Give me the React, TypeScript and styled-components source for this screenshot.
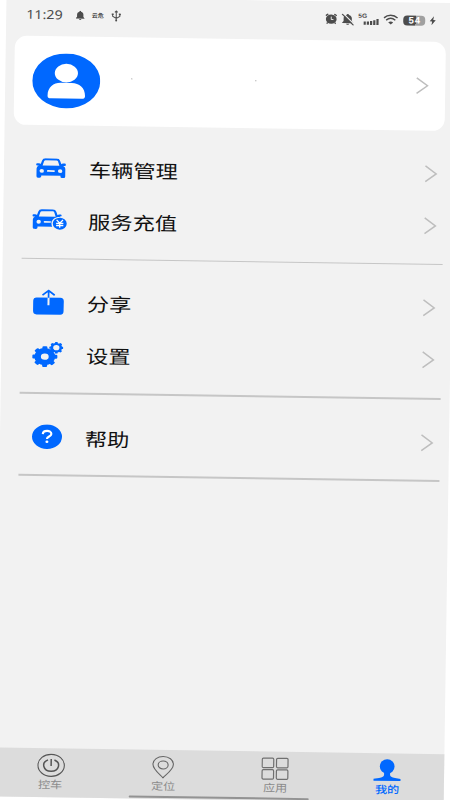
import React from "react";
import styled, { createGlobalStyle } from "styled-components";

const BLUE = "#0068ff";

const GlobalStyle = createGlobalStyle`
  * { box-sizing: border-box; }
  body {
    margin: 0;
    background: #fff;
    font-family: "Noto Sans CJK SC", "Noto Sans", sans-serif;
  }
`;

const Viewport = styled.div`
  width: 450px;
  height: 800px;
  overflow: hidden;
  background: #fff;
`;

const Screen = styled.main`
  display: flex;
  flex-direction: column;
  position: relative;
  width: 449px;
  height: 800px;
  background: #f2f2f2;
  transform-origin: 0 0;
  transform: matrix(1, 0.0148, -0.0148, 1, 6.5, -3.5);
`;

const StatusBar = styled.header`
  display: flex;
  align-items: center;
  justify-content: space-between;
  height: 38.7px;
  padding: 0 19px 3px 19.5px;
  color: #4c4c4c;
`;

const StatusGroup = styled.div`
  display: flex;
  align-items: center;
`;

const Clock = styled.span`
  width: 49px;
  font: 400 12.5px/16px "Noto Sans", sans-serif;
  transform: scaleX(1.14);
  transform-origin: left;
`;

const TinyText = styled.span`
  width: 12px;
  margin: 0 7px 0 7px;
  font-size: 6px;
  line-height: 8px;
  font-weight: 700;
  white-space: nowrap;
`;

const Glyph = styled.svg<{ $gap?: number }>`
  display: block;
  flex: none;
  margin-left: ${(p) => p.$gap ?? 0}px;
`;

const Network = styled.div`
  display: flex;
  width: 21px;
  height: 16px;
  margin-left: 4px;
`;

const NetworkLabel = styled.span`
  width: 5px;
  font: 700 6px/8px "Liberation Sans", sans-serif;
  transform: scaleX(1.1);
  transform-origin: left;
`;

const Battery = styled.span`
  display: flex;
  justify-content: center;
  width: 22px;
  height: 10px;
  margin-left: 5px;
  border-radius: 4px;
  background: linear-gradient(90deg, #4c4c4c 56%, #a0a0a0 56%);
  color: #fff;
  font: 700 9.5px/10.5px "Liberation Sans", sans-serif;
  letter-spacing: 1px;
  padding-left: 1px;
`;

const ProfileCard = styled.section`
  display: flex;
  align-items: center;
  flex: none;
  height: 89.3px;
  margin: 0 8.6px;
  padding: 0 16.5px 0 18.5px;
  border-radius: 12px;
  background: #fff;
`;

const ProfileSpace = styled.div`
  display: flex;
  flex: 1;
  gap: 123px;
  padding: 0 0 6px 31px;
`;

const Speck = styled.i`
  width: 1px;
  height: 1px;
  background: #999;
`;

const Group = styled.section`
  flex: none;
  margin: 0 8.6px 0 19px;
  padding-top: 17px;
`;

const Divider = styled.div`
  height: 1.5px;
  margin-top: 11.8px;
  background: #c6c6c6;
`;

const Row = styled.div`
  display: grid;
  grid-template-columns: 66.2px 1fr 20px;
  align-items: center;
  height: 52px;
`;

const RowIcon = styled.span`
  display: flex;
  justify-content: center;
  width: 55px;
`;

const RowLabel = styled.span`
  justify-self: start;
  font-size: 18.4px;
  line-height: 26px;
  color: #111;
  transform: translateY(0.5px) scaleX(1.21);
  transform-origin: left;
`;

const Spacer = styled.div`
  flex: 1;
`;

const TabBar = styled.nav`
  display: grid;
  grid-template-columns: repeat(4, 1fr);
  height: 49.5px;
  background: #dcdcdc;
`;

const Tab = styled.div<{ $active?: boolean }>`
  display: flex;
  flex-direction: column;
  align-items: center;
  padding: 5px 1px 0 0;
  color: ${(p) => (p.$active ? BLUE : "#8b8b8b")};
  font-weight: ${(p) => (p.$active ? 500 : 400)};
`;

const TabLabel = styled.span`
  font-size: 10.3px;
  line-height: 13px;
  transform: scaleX(1.18);
`;

const HomeIndicator = styled.div`
  position: absolute;
  left: 134px;
  bottom: 1px;
  width: 180px;
  height: 2px;
  border-radius: 1px;
  background: #939393;
`;

const Chevron = () => (
  <Glyph width="14" height="18" viewBox="0 0 14 18" fill="none" stroke="#bebebe" strokeWidth="1.5">
    <path d="M1.4 1.2 12.2 9 1.4 16.8" />
  </Glyph>
);

const Avatar = () => (
  <Glyph width="68" height="55" viewBox="0 0 68 55">
    <ellipse cx="34" cy="27.5" rx="34" ry="27.5" fill={BLUE} />
    <ellipse cx="34" cy="19.7" rx="11.6" ry="9.3" fill="#fff" />
    <path d="M15.5 42.5C15.5 34 21.5 29.5 28.5 29.5h11C47 29.5 53 34 53 42.5q0 2.6-3.3 2.6H18.8q-3.3 0-3.3-2.6Z" fill="#fff" />
  </Glyph>
);

const CarIcon = () => (
  <Glyph width="30" height="20" viewBox="0 0 30 20">
    <path fill={BLUE} fillRule="evenodd" d="M6 2.5Q6.8.2 9.5.2h11q2.7 0 3.5 2.3L25.3 6q.3-.8 2-.8h1.5q1 0 1 .8v.8q0 .8-1 .8h-1.6q2.2 1 2.2 3v7.5q0 1.6-1.5 1.6h-1.7q-1.6 0-1.6-1.4v-.8H5.4v.8q0 1.4-1.6 1.4H2.1Q.6 19.7.6 18.1v-7.5q0-2 2.2-3H1.2q-1 0-1-.8V6q0-.8 1-.8h1.5q1.7 0 2 .8ZM8.1 3 6.6 7.4h16.8L21.9 3q-.4-.9-1.4-.9h-11q-1 0-1.4.9ZM5.8 10.9a2.2 1.9 0 1 0 0 3.8 2.2 1.9 0 0 0 0-3.8m18.4 0a2.2 1.9 0 1 0 0 3.8 2.2 1.9 0 0 0 0-3.8M12 11.9q-1 0-1 .9t1 .9h6q1 0 1-.9t-1-.9Z" />
  </Glyph>
);

const RechargeIcon = () => (
  <Glyph width="35" height="23" viewBox="0 0 35 23">
    <path fill={BLUE} fillRule="evenodd" d="M6 3.5Q6.8 1.2 9.5 1.2h11q2.7 0 3.5 2.3L25.3 7q.3-.8 2-.8h1q1 0 1 .8v.8h-2.1q1 .4 1.5 1.1c-5-.7-9.4 2-9.4 6.4q0 1.7.8 3.2H5.4v1q0 1.4-1.6 1.4H2.1Q.6 20.9.6 19.3v-7.7q0-2 2.2-3H1.2q-1 0-1-.8V7q0-.8 1-.8h1.5q1.7 0 2 .8ZM8.1 4 6.6 8.4h16.8L21.9 4q-.4-.9-1.4-.9h-11q-1 0-1.4.9ZM6.5 11.8a2.2 1.9 0 1 0 0 3.8 2.2 1.9 0 0 0 0-3.8m6 1.2q-1 0-1 .8t1 .8h5.5q.8 0 1-.8t-1-.8Z" />
    <ellipse cx="27.6" cy="15.3" rx="7" ry="6" fill={BLUE} />
    <path d="m24.4 11.6 3.2 3.2 3.2-3.2M24 15.1h7.2M24 17.2h7.2m-3.6-2.6v4.8" fill="none" stroke="#fff" strokeWidth="1.3" />
  </Glyph>
);

const ShareIcon = () => (
  <Glyph width="31" height="26" viewBox="0 0 31 26">
    <rect x=".2" y="8.4" width="30.6" height="17" rx="3.5" fill={BLUE} />
    <path d="M15.5 8v8" stroke="#f2f2f2" strokeWidth="2" />
    <path d="M15.5 8.6V1.5M9.4 6l6.1-4.7L21.6 6" fill="none" stroke={BLUE} strokeWidth="1.7" />
  </Glyph>
);

const teeth = (count: number) => Array.from({ length: count }, (_, i) => (i * 360) / count);

const Gear = ({ r, hole }: { r: number; hole: number }) => {
  const body = r * 0.83;
  return (
    <g>
      <circle r={(body + hole) / 2} fill="none" stroke={BLUE} strokeWidth={body - hole} />
      {teeth(8).map((angle) => (
        <rect key={angle} x={-r * 0.2} y={-r} width={r * 0.4} height={r * 0.35} rx={r * 0.1} fill={BLUE} transform={`rotate(${angle})`} />
      ))}
    </g>
  );
};

const SettingsIcon = () => (
  <Glyph width="31" height="26" viewBox="0 0 31 26">
    <g transform="translate(12.6 15.5) scale(1.22 1)"><Gear r={10.3} hole={3.2} /></g>
    <g transform="translate(24 6.4) scale(1.21 1)"><Gear r={5.8} hole={2.6} /></g>
  </Glyph>
);

const HelpIcon = () => (
  <Glyph width="30" height="25" viewBox="0 0 30 25">
    <ellipse cx="15" cy="12.5" rx="15" ry="12.2" fill={BLUE} />
    <path d="M10.8 10C10.8 5.8 19.3 5.6 19.3 9.7c0 2.5-4.3 2.5-4.3 5" fill="none" stroke="#fff" strokeWidth="2.2" />
    <ellipse cx="15" cy="17.5" rx="1.5" ry="1.3" fill="#fff" />
  </Glyph>
);

const PowerIcon = () => (
  <Glyph width="28" height="24" viewBox="0 0 28 24" fill="none" stroke="#555">
    <ellipse cx="14" cy="12" rx="13.2" ry="11" strokeWidth="1.1" />
    <path d="M10.8 6.6C3.8 9.2 6 18 14 18s10.2-8.8 3.2-11.4M14 5.6v7" strokeWidth="1.5" />
  </Glyph>
);

const PinIcon = () => (
  <Glyph width="24" height="24" viewBox="0 0 24 24" fill="none" stroke="#666" strokeWidth="1.1">
    <path d="M12 22.8C9 19.5 1.8 14.5 1.8 9.3 1.8 4.8 6.4 1.5 12 1.5s10.2 3.3 10.2 7.8c0 5.2-7.2 10.2-10.2 13.5Z" />
    <ellipse cx="12" cy="10" rx="5" ry="4" />
  </Glyph>
);

const AppsIcon = () => (
  <Glyph width="28" height="24" viewBox="0 0 28 24" fill="none" stroke="#707070" strokeWidth="1.2">
    <rect x="1" y="1.6" width="11.5" height="9.5" rx="1.2" />
    <rect x="15.3" y="1.6" width="11.5" height="9.5" rx="1.2" />
    <rect x="1" y="13.1" width="11.5" height="9.5" rx="1.2" />
    <rect x="15.3" y="13.1" width="11.5" height="9.5" rx="1.2" />
  </Glyph>
);

const MineIcon = () => (
  <Glyph width="28" height="24" viewBox="0 0 28 24" fill={BLUE}>
    <ellipse cx="14" cy="8.2" rx="7.4" ry="7.2" />
    <path d="M11 13h6v3.5q0 2.5 5 3.2l5.5.9v2H.5v-2l5.5-.9q5-.7 5-3.2Z" />
  </Glyph>
);

const BellIcon = ({ gap = 0, muted = false }: { gap?: number; muted?: boolean }) => (
  <Glyph $gap={gap} width={muted ? 13 : 10} height={muted ? 12 : 10} viewBox="0 0 12 11" preserveAspectRatio="none">
    <path d="M6 .3c.7 0 1 .3 1 .9 2 .4 2.8 1.8 2.8 3.3v2.4l1.3 1.4v.5H.9v-.5l1.3-1.4V4.5C2.2 3 3 1.6 5 1.2c0-.6.3-.9 1-.9M4.5 9.4h3c-.3 1.3-2.7 1.3-3 0" fill="currentColor" />
    {muted && (
      <>
        <path d="M1.8 0 12 9.8" stroke="#f2f2f2" strokeWidth="1.2" />
        <path d="M.7.4 11.4 10.7" stroke="currentColor" strokeWidth="1.1" />
      </>
    )}
  </Glyph>
);

const groups = [
  [
    { label: "车辆管理", icon: <CarIcon /> },
    { label: "服务充值", icon: <RechargeIcon /> },
  ],
  [
    { label: "分享", icon: <ShareIcon /> },
    { label: "设置", icon: <SettingsIcon /> },
  ],
  [{ label: "帮助", icon: <HelpIcon /> }],
];

const tabs = [
  { label: "控车", icon: <PowerIcon /> },
  { label: "定位", icon: <PinIcon /> },
  { label: "应用", icon: <AppsIcon /> },
  { label: "我的", icon: <MineIcon />, active: true },
];

export default function App() {
  return (
    <Viewport>
      <GlobalStyle />
      <Screen>
        <StatusBar>
          <StatusGroup>
            <Clock>11:29</Clock>
            <BellIcon />
            <TinyText>云危</TinyText>
            <Glyph width="10" height="12" viewBox="0 0 10 12" fill="none" stroke="currentColor">
              <path d="M5 1v9M1.4 4v2.2L5 8.3l3.6-2.1V4M3.6 2.3 5 .8l1.4 1.5" />
              <circle cx="5" cy="10.3" r="1" fill="currentColor" stroke="none" />
              <path d="M.4 4.2h2M7.6 4.2h2" strokeWidth="1.5" />
            </Glyph>
          </StatusGroup>
          <StatusGroup>
            <Glyph width="12" height="11" viewBox="0 0 12 11">
              <ellipse cx="6" cy="5.8" rx="5.4" ry="4.7" fill="currentColor" />
              <path d="M.5 2.4 3 .6M11.5 2.4 9 .6M2.5 9.2l-1 1.2M9.5 9.2l1 1.2" stroke="currentColor" strokeWidth="1.3" />
              <path d="M6 3.3v2.9h2.2" fill="none" stroke="#f2f2f2" strokeWidth=".9" />
            </Glyph>
            <BellIcon gap={4} muted />
            <Network>
              <NetworkLabel>5G</NetworkLabel>
              <Glyph width="16" height="16" viewBox="0 0 16 16" fill="currentColor">
                <path d="M.4 9.7h2.2v3.3H.4zM3.6 9.7h2.2v3.3H3.6zM6.8 9.2h2.2v3.8H6.8zM10 8.2h2.2v4.8H10zM13.2 7.1h2.2v5.9h-2.2z" />
              </Glyph>
            </Network>
            <Glyph $gap={4} width="15" height="11" viewBox="0 0 15 11" fill="none" stroke="currentColor" strokeWidth="1.4">
              <path d="M.7 3.8C4.7.1 10.3.1 14.3 3.8M2.9 6c2.8-2.3 6.4-2.3 9.2 0" />
              <path d="M5 8.2c1.7-1.2 3.3-1.2 5 0L7.5 10.4Z" fill="currentColor" stroke="none" />
            </Glyph>
            <Battery>54</Battery>
            <Glyph $gap={4} width="7" height="10" viewBox="0 0 7 10">
              <path d="M4.7.5.5 5.6h2.4L2.3 9.5l4.2-5.2H4Z" fill="currentColor" />
            </Glyph>
          </StatusGroup>
        </StatusBar>
        <ProfileCard>
          <Avatar />
          <ProfileSpace><Speck /><Speck /></ProfileSpace>
          <Chevron />
        </ProfileCard>
        {groups.map((rows, index) => (
          <Group key={index}>
            {rows.map((row) => (
              <Row key={row.label}>
                <RowIcon>{row.icon}</RowIcon>
                <RowLabel>{row.label}</RowLabel>
                <Chevron />
              </Row>
            ))}
            <Divider />
          </Group>
        ))}
        <Spacer />
        <TabBar>
          {tabs.map((tab) => (
            <Tab key={tab.label} $active={tab.active}>
              {tab.icon}
              <TabLabel>{tab.label}</TabLabel>
            </Tab>
          ))}
        </TabBar>
        <HomeIndicator />
      </Screen>
    </Viewport>
  );
}
